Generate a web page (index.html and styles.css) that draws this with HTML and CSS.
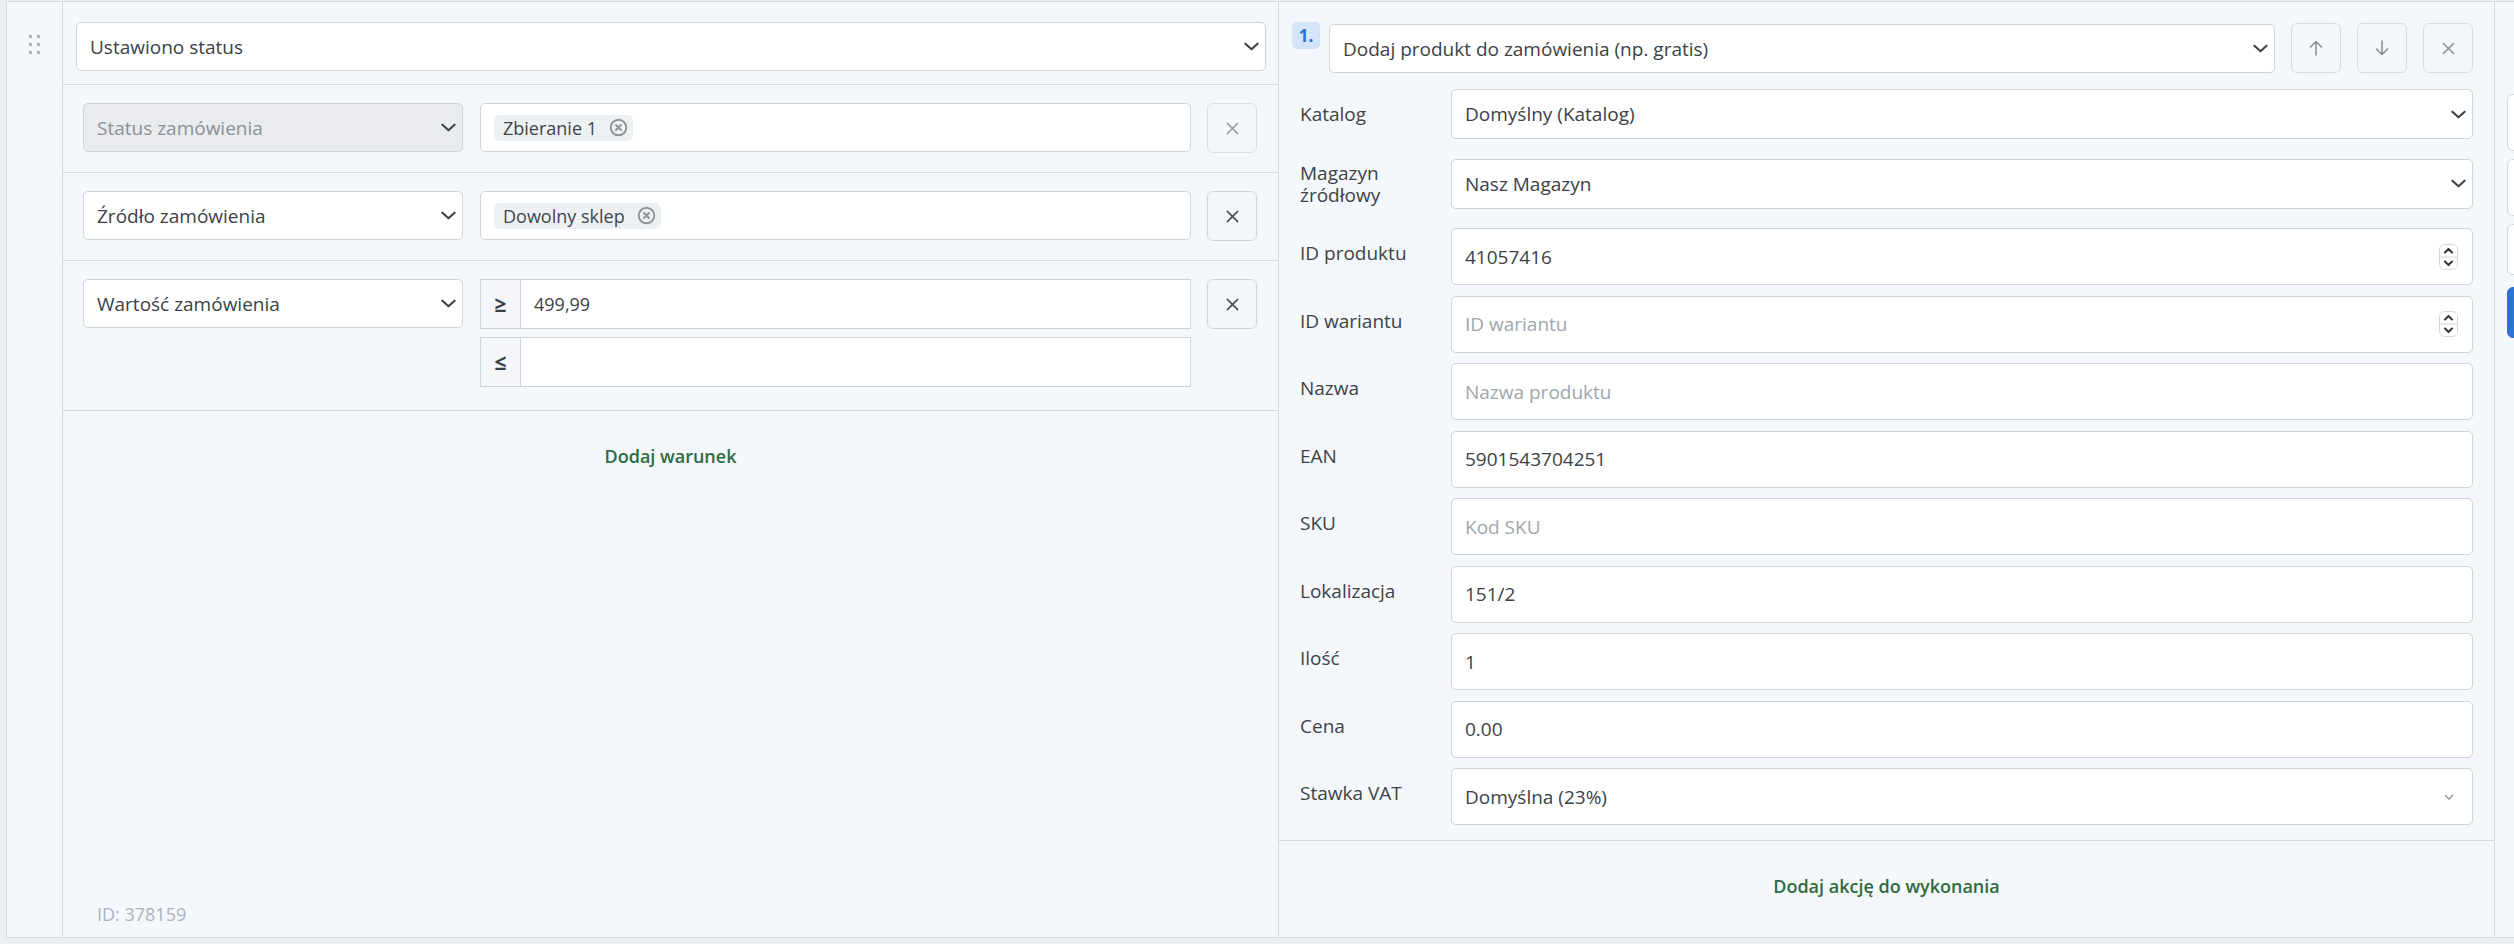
FILE: index.html
```html
<!DOCTYPE html>
<html lang="pl">
<head>
    <meta charset="UTF-8">
    <meta name="viewport" content="width=device-width, initial-scale=1.0">
    <title>Automatyczna akcja</title>
    <link rel="stylesheet" href="styles.css">
</head>
<body>
    <div class="page">
        <div class="rule-card">
            <!-- drag handle column -->
            <div class="drag-col">
                <div class="drag-handle">
                    <i></i><i></i><i></i><i></i><i></i><i></i>
                </div>
            </div>

            <!-- conditions -->
            <div class="conditions">
                <div class="trigger">
                    <div class="select">
                        <span>Ustawiono status</span>
                        <svg class="chev" viewBox="0 0 16 9" width="15" height="9"><path d="M1.5 1.5 8 7.5 14.5 1.5"/></svg>
                    </div>
                </div>

                <div class="cond-row">
                    <div class="select cond-type disabled">
                        <span>Status zamówienia</span>
                        <svg class="chev" viewBox="0 0 16 9" width="15" height="9"><path d="M1.5 1.5 8 7.5 14.5 1.5"/></svg>
                    </div>
                    <div class="tag-input">
                        <span class="tag">Zbieranie 1
                            <svg class="tag-x" viewBox="0 0 20 20" width="19" height="19"><circle cx="10" cy="10" r="8.2"/><path d="M7.4 7.4 12.6 12.6M12.6 7.4 7.4 12.6"/></svg>
                        </span>
                    </div>
                    <button class="icon-btn muted"><svg viewBox="0 0 14 14" width="13" height="13"><path d="M1.5 1.5 12.5 12.5M12.5 1.5 1.5 12.5"/></svg></button>
                </div>

                <div class="cond-row">
                    <div class="select cond-type">
                        <span>Źródło zamówienia</span>
                        <svg class="chev" viewBox="0 0 16 9" width="15" height="9"><path d="M1.5 1.5 8 7.5 14.5 1.5"/></svg>
                    </div>
                    <div class="tag-input">
                        <span class="tag">Dowolny sklep
                            <svg class="tag-x" viewBox="0 0 20 20" width="19" height="19"><circle cx="10" cy="10" r="8.2"/><path d="M7.4 7.4 12.6 12.6M12.6 7.4 7.4 12.6"/></svg>
                        </span>
                    </div>
                    <button class="icon-btn"><svg viewBox="0 0 14 14" width="13" height="13"><path d="M1.5 1.5 12.5 12.5M12.5 1.5 1.5 12.5"/></svg></button>
                </div>

                <div class="cond-row range-row">
                    <div class="select cond-type">
                        <span>Wartość zamówienia</span>
                        <svg class="chev" viewBox="0 0 16 9" width="15" height="9"><path d="M1.5 1.5 8 7.5 14.5 1.5"/></svg>
                    </div>
                    <div class="range">
                        <div class="input-group">
                            <span class="addon">≥</span>
                            <span class="value">499,99</span>
                        </div>
                        <div class="input-group">
                            <span class="addon">≤</span>
                            <span class="value"></span>
                        </div>
                    </div>
                    <button class="icon-btn"><svg viewBox="0 0 14 14" width="13" height="13"><path d="M1.5 1.5 12.5 12.5M12.5 1.5 1.5 12.5"/></svg></button>
                </div>

                <div class="add-link">Dodaj warunek</div>
                <div class="rule-id">ID: 378159</div>
            </div>

            <!-- actions -->
            <div class="actions">
                <div class="action-head">
                    <span class="badge">1.</span>
                    <div class="select action-type">
                        <span>Dodaj produkt do zamówienia (np. gratis)</span>
                        <svg class="chev" viewBox="0 0 16 9" width="15" height="9"><path d="M1.5 1.5 8 7.5 14.5 1.5"/></svg>
                    </div>
                    <button class="icon-btn light"><svg viewBox="0 0 14 16" width="14" height="16"><path d="M7 15V1.5M1.5 7 7 1.5 12.5 7"/></svg></button>
                    <button class="icon-btn light"><svg viewBox="0 0 14 16" width="14" height="16"><path d="M7 1V14.5M1.5 9 7 14.5 12.5 9"/></svg></button>
                    <button class="icon-btn light"><svg viewBox="0 0 14 14" width="13" height="13"><path d="M1.5 1.5 12.5 12.5M12.5 1.5 1.5 12.5"/></svg></button>
                </div>

                <div class="action-fields">
                    <div class="field-row select-row">
                        <label>Katalog</label>
                        <div class="select">
                            <span>Domyślny (Katalog)</span>
                            <svg class="chev" viewBox="0 0 16 9" width="15" height="9"><path d="M1.5 1.5 8 7.5 14.5 1.5"/></svg>
                        </div>
                    </div>
                    <div class="field-row select-row">
                        <label>Magazyn<br>źródłowy</label>
                        <div class="select">
                            <span>Nasz Magazyn</span>
                            <svg class="chev" viewBox="0 0 16 9" width="15" height="9"><path d="M1.5 1.5 8 7.5 14.5 1.5"/></svg>
                        </div>
                    </div>
                    <div class="field-row">
                        <label>ID produktu</label>
                        <div class="input">
                            <span>41057416</span>
                            <svg class="spin" viewBox="0 0 19 26" width="19" height="26"><rect x="0.5" y="0.5" width="18" height="25" rx="5"/><line x1="1" y1="13" x2="18" y2="13"/><path d="M6 8.5 9.5 5 13 8.5M6 17.5 9.5 21 13 17.5"/></svg>
                        </div>
                    </div>
                    <div class="field-row">
                        <label>ID wariantu</label>
                        <div class="input">
                            <span class="placeholder">ID wariantu</span>
                            <svg class="spin" viewBox="0 0 19 26" width="19" height="26"><rect x="0.5" y="0.5" width="18" height="25" rx="5"/><line x1="1" y1="13" x2="18" y2="13"/><path d="M6 8.5 9.5 5 13 8.5M6 17.5 9.5 21 13 17.5"/></svg>
                        </div>
                    </div>
                    <div class="field-row">
                        <label>Nazwa</label>
                        <div class="input"><span class="placeholder">Nazwa produktu</span></div>
                    </div>
                    <div class="field-row">
                        <label>EAN</label>
                        <div class="input"><span>5901543704251</span></div>
                    </div>
                    <div class="field-row">
                        <label>SKU</label>
                        <div class="input"><span class="placeholder">Kod SKU</span></div>
                    </div>
                    <div class="field-row">
                        <label>Lokalizacja</label>
                        <div class="input"><span>151/2</span></div>
                    </div>
                    <div class="field-row">
                        <label>Ilość</label>
                        <div class="input"><span>1</span></div>
                    </div>
                    <div class="field-row">
                        <label>Cena</label>
                        <div class="input"><span>0.00</span></div>
                    </div>
                    <div class="field-row">
                        <label>Stawka VAT</label>
                        <div class="input">
                            <span>Domyślna (23%)</span>
                            <svg class="chev-small" viewBox="0 0 10 6" width="10" height="6"><path d="M1 1 5 5 9 1"/></svg>
                        </div>
                    </div>
                </div>

                <div class="add-link">Dodaj akcję do wykonania</div>
            </div>

            <!-- next column, cut off at the window edge -->
            <div class="side-col">
                <div class="side-box tall"></div>
                <div class="side-box tall"></div>
                <div class="side-box"></div>
                <div class="side-box primary"></div>
            </div>
        </div>
    </div>
</body>
</html>
```

FILE: styles.css
```css
* {
    box-sizing: border-box;
}

body {
    margin: 0;
    background: #eceef1;
    font-family: 'Open Sans', 'Noto Sans', sans-serif;
    font-size: 19px;
    color: #3c4147;
    overflow: hidden;
}

.page {
    width: 2514px;
    height: 944px;
    padding: 1px 0 0 6px;
    overflow: hidden;
}

.rule-card {
    display: flex;
    height: 937px;
    width: 2700px;
    background: #f4f8fc;
    border: 1px solid #d6dade;
}

/* drag handle */
.drag-col {
    width: 56px;
    flex: none;
    border-right: 1px solid #d6dade;
    padding: 33px 0 0 22px;
}

.drag-handle {
    display: grid;
    grid-template-columns: 3px 3px;
    column-gap: 5px;
    row-gap: 5px;
}

.drag-handle i {
    display: block;
    width: 3px;
    height: 3px;
    border-radius: 1px;
    background: #a6acb3;
}

/* shared form controls */
.select,
.input {
    display: flex;
    align-items: center;
    justify-content: space-between;
    height: 49px;
    padding: 0 6px 0 13px;
    background: #fff;
    border: 1px solid #cfd4da;
    border-radius: 5px;
    white-space: nowrap;
}

.select.disabled {
    background: #e9ebee;
    color: #8b9198;
}

.chev {
    flex: none;
    fill: none;
    stroke: #3c4147;
    stroke-width: 2.2;
    stroke-linecap: round;
    stroke-linejoin: round;
}

.chev-small {
    flex: none;
    margin-right: 4px;
    fill: none;
    stroke: #8b9198;
    stroke-width: 1.3;
}

.placeholder {
    color: #a0a6ad;
}

.icon-btn {
    flex: none;
    width: 50px;
    height: 50px;
    padding: 0;
    display: flex;
    align-items: center;
    justify-content: center;
    background: #f4f8fc;
    border: 1px solid #cfd4da;
    border-radius: 6px;
    cursor: pointer;
}

.icon-btn svg {
    fill: none;
    stroke: #41464c;
    stroke-width: 1.6;
    stroke-linecap: round;
    stroke-linejoin: round;
}

.icon-btn.muted {
    border-color: #dde1e5;
}

.icon-btn.muted svg {
    stroke: #999fa6;
}

.icon-btn.light {
    border-color: #d9dde2;
}

.icon-btn.light svg {
    stroke: #858b92;
    stroke-width: 1.5;
}

/* conditions column */
.conditions {
    width: 1216px;
    flex: none;
    display: flex;
    flex-direction: column;
    border-right: 1px solid #d6dade;
}

.trigger {
    padding: 20px 12px 13px 13px;
    border-bottom: 1px solid #d6dade;
}

.cond-row {
    display: flex;
    align-items: flex-start;
    gap: 17px;
    padding: 18px 21px 19px 20px;
    border-bottom: 1px solid #d6dade;
}

.cond-row .icon-btn {
    margin-left: -1px;
}

.range-row {
    padding-bottom: 23px;
}

.cond-type {
    width: 380px;
    flex: none;
}

.tag-input {
    flex: 1;
    height: 49px;
    display: flex;
    align-items: center;
    padding: 0 13px;
    background: #fff;
    border: 1px solid #cfd4da;
    border-radius: 5px;
}

.tag {
    display: inline-flex;
    align-items: center;
    gap: 12px;
    height: 26px;
    padding: 0 5px 0 9px;
    background: #eef1f4;
    border-radius: 5px;
    font-size: 18px;
    color: #40454b;
}

.tag-x {
    fill: none;
    stroke: #8d939a;
    stroke-width: 2;
    stroke-linecap: round;
}

.range {
    flex: 1;
    display: flex;
    flex-direction: column;
    gap: 8px;
}

.input-group {
    display: flex;
    height: 50px;
    background: #fff;
    border: 1px solid #cfd4da;
}

.addon {
    width: 40px;
    flex: none;
    display: flex;
    align-items: center;
    justify-content: center;
    background: #f4f6f9;
    border-right: 1px solid #cfd4da;
    font-weight: 700;
    font-size: 21px;
    color: #3c4147;
}

.input-group .value {
    display: flex;
    align-items: center;
    padding: 0 13px;
    font-size: 18px;
}

.add-link {
    padding-top: 33px;
    line-height: 24px;
    text-align: center;
    font-size: 18px;
    font-weight: 600;
    color: #2f6b3c;
    cursor: pointer;
}

.rule-id {
    margin-top: auto;
    padding: 0 0 11px 34px;
    line-height: 24px;
    font-size: 18px;
    color: #adb3ba;
}

/* actions column */
.actions {
    width: 1216px;
    flex: none;
    display: flex;
    flex-direction: column;
    border-right: 1px solid #d6dade;
}

.action-head {
    display: flex;
    align-items: flex-start;
    gap: 16px;
    padding: 20px 21px 0 13px;
}

.badge {
    flex: none;
    width: 28px;
    height: 27px;
    margin-right: -7px;
    display: flex;
    align-items: center;
    justify-content: center;
    background: #d4e5fa;
    border-radius: 5px;
    font-size: 17px;
    font-weight: 700;
    color: #2f6fd0;
}

.action-type {
    flex: 1;
    margin-top: 2px;
}

.action-head .icon-btn {
    margin-top: 1px;
}

.action-fields {
    padding: 16px 21px 15px 21px;
    border-bottom: 1px solid #d6dade;
}

.field-row {
    display: flex;
    align-items: flex-start;
    margin-bottom: 10.5px;
}

.field-row:last-child {
    margin-bottom: 0;
}

.field-row label {
    width: 151px;
    flex: none;
    min-height: 50px;
    display: flex;
    align-items: center;
    line-height: 22px;
    color: #3d4248;
}

.field-row .select,
.field-row .input {
    flex: 1;
}

.field-row .select {
    height: 50px;
}

.field-row .input {
    height: 57px;
    padding-right: 14px;
}

.select-row {
    margin-bottom: 19.5px;
}

.spin rect {
    fill: #fff;
    stroke: #d3d7dc;
}

.spin line {
    stroke: #d3d7dc;
}

.spin path {
    fill: none;
    stroke: #2f3439;
    stroke-width: 2;
    stroke-linecap: round;
    stroke-linejoin: round;
}

/* neighbouring column */
.side-col {
    padding: 92px 0 0 12px;
    width: 200px;
    flex: none;
}

.side-box {
    height: 51px;
    margin-bottom: 12px;
    background: #fff;
    border: 1px solid #d3d7dc;
    border-radius: 6px;
}

.side-box.tall {
    height: 57px;
    margin-bottom: 8px;
}

.side-box.primary {
    background: #2e72d3;
    border-color: #2e72d3;
}
```
